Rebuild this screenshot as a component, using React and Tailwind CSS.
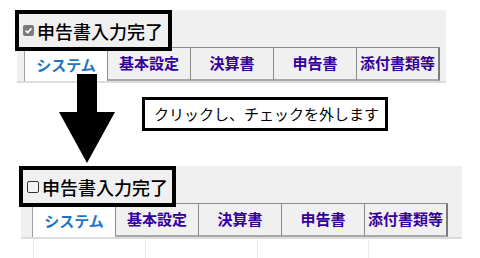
import React from "react";

const tabs = ["システム", "基本設定", "決算書", "申告書", "添付書類等"];

const CheckMark = ({ checked }) =>
  checked ? (
    <span className="flex h-[11px] w-[11px] items-center justify-center rounded-[2px] bg-[#7b7b7b]">
      <svg viewBox="0 0 10 10" className="h-[9px] w-[9px]">
        <path d="M1.8 5.2 L4 7.3 L8.3 2.6" fill="none" stroke="#fff" strokeWidth="1.8" />
      </svg>
    </span>
  ) : (
    <span className="block h-[12px] w-[12px] rounded-[2px] border border-[#333] bg-[#f4f4f4]" />
  );

const TabRow = () => (
  <div className="relative flex">
    {tabs.map((t, i) => {
      const active = i === 0;
      const last = i === tabs.length - 1;
      return (
        <div
          key={t}
          className={
            active
              ? "flex h-[34px] w-[83px] items-center justify-center border-l border-[#a0a0a0] bg-white pt-[3px] text-[15px] font-bold text-[#1f74c2]"
              : last
              ? "flex h-[34px] w-[84px] items-center justify-center border-t border-l border-r-2 border-b-2 border-t-[#8c8c8c] border-l-[#8c8c8c] border-r-[#7a7a7a] border-b-[#a8a8a8] bg-[#f0f0f0] text-[15px] font-bold text-[#33009c]"
              : "flex h-[34px] w-[83px] items-center justify-center border-t border-l border-b-2 border-t-[#8c8c8c] border-l-[#8c8c8c] border-b-[#a8a8a8] bg-[#f0f0f0] text-[15px] font-bold text-[#33009c]"
          }
        >
          {active && (
            <div className="absolute left-0 top-0 h-[4px] w-[83px] bg-gradient-to-b from-[#6d9fd8] to-[#cfe0f4]" />
          )}
          {t}
        </div>
      );
    })}
  </div>
);

const Panel = ({ checked, width, tabOffset, className }) => (
  <div className={className}>
    <div className="bg-[#f0f0f0] border-b-2 border-[#dcdcdc]" style={{ width }}>
      <div className="relative z-10 -ml-[2px] flex h-[41px] w-[157px] items-center gap-[3px] border-4 border-black pl-[4px]">
        <CheckMark checked={checked} />
        <span className="text-[18px] font-medium leading-none text-black">申告書入力完了</span>
      </div>
      <div className="-mt-[4px]" style={{ marginLeft: tabOffset }}>
        <TabRow />
      </div>
    </div>
  </div>
);

export default function App() {
  return (
    <div
      className="relative h-[258px] w-[480px] overflow-hidden bg-white"
      style={{ fontFamily: '"Noto Sans CJK JP", "Noto Sans", sans-serif' }}
    >
      <Panel checked className="ml-[17px] pt-[10px]" width={429} tabOffset={7} />

      <Panel checked={false} className="ml-[21px] mt-[83px]" width={441} tabOffset={11} />

      <div className="ml-[33px] flex h-[20px]">
        <div className="w-[120px] border-l border-[#ececec]" />
        <div className="w-[120px] border-l border-[#ececec]" />
        <div className="w-[120px] border-l border-[#ececec]" />
        <div className="w-[120px] border-l border-[#ececec]" />
      </div>

      <svg className="absolute left-[59px] top-[74px]" width="57" height="90" viewBox="0 0 57 90">
        <polygon points="18,0 38,0 38,38 56,38 28,89 0,38 18,38" fill="#000" />
      </svg>

      <div className="absolute left-[142px] top-[97px] flex h-[34px] w-[246px] items-center border-[3px] border-black bg-white pl-[9px] text-[15px] text-black">
        クリックし、チェックを外します
      </div>
    </div>
  );
}
